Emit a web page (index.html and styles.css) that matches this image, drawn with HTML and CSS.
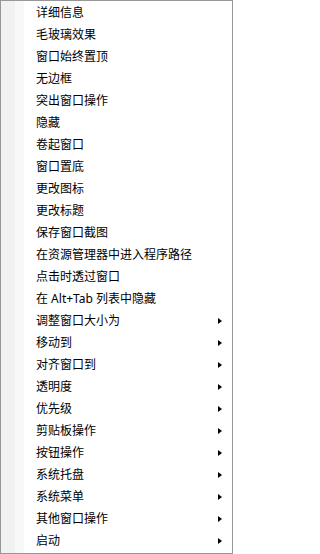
FILE: index.html
```html
<!DOCTYPE html>
<html lang="zh-CN">
<head>
<meta charset="utf-8">
<link rel="stylesheet" href="styles.css">
</head>
<body>
<div class="menu">
  <ul class="items">
    <li class="item"><span class="label">详细信息</span></li>
    <li class="item"><span class="label">毛玻璃效果</span></li>
    <li class="item"><span class="label">窗口始终置顶</span></li>
    <li class="item"><span class="label">无边框</span></li>
    <li class="item"><span class="label">突出窗口操作</span></li>
    <li class="item"><span class="label">隐藏</span></li>
    <li class="item"><span class="label">卷起窗口</span></li>
    <li class="item"><span class="label">窗口置底</span></li>
    <li class="item"><span class="label">更改图标</span></li>
    <li class="item"><span class="label">更改标题</span></li>
    <li class="item"><span class="label">保存窗口截图</span></li>
    <li class="item"><span class="label">在资源管理器中进入程序路径</span></li>
    <li class="item"><span class="label">点击时透过窗口</span></li>
    <li class="item"><span class="label">在 Alt+Tab 列表中隐藏</span></li>
    <li class="item sub"><span class="label">调整窗口大小为</span><span class="arrow"></span></li>
    <li class="item sub"><span class="label">移动到</span><span class="arrow"></span></li>
    <li class="item sub"><span class="label">对齐窗口到</span><span class="arrow"></span></li>
    <li class="item sub"><span class="label">透明度</span><span class="arrow"></span></li>
    <li class="item sub"><span class="label">优先级</span><span class="arrow"></span></li>
    <li class="item sub"><span class="label">剪贴板操作</span><span class="arrow"></span></li>
    <li class="item sub"><span class="label">按钮操作</span><span class="arrow"></span></li>
    <li class="item sub"><span class="label">系统托盘</span><span class="arrow"></span></li>
    <li class="item sub"><span class="label">系统菜单</span><span class="arrow"></span></li>
    <li class="item sub"><span class="label">其他窗口操作</span><span class="arrow"></span></li>
    <li class="item sub"><span class="label">启动</span><span class="arrow"></span></li>
  </ul>
</div>
</body>
</html>
```

FILE: styles.css
```css
html, body {
  margin: 0;
  padding: 0;
  background: #ffffff;
}

.menu {
  width: 233px;
  height: 554px;
  box-sizing: border-box;
  border: 1px solid #979797;
  background: linear-gradient(to right, #f1f1f1 0, #f1f1f1 14px, #f8f8f8 14px, #f8f8f8 23px, #ffffff 23px);
  font-family: "Noto Sans", "Noto Sans CJK SC", sans-serif;
  font-size: 12px;
  color: #000000;
}

.items {
  list-style: none;
  margin: 0;
  padding: 1px 0 0 0;
}

.item {
  height: 22px;
  display: flex;
  align-items: center;
  padding-left: 35px;
  padding-right: 10px;
}

.label {
  flex: 1;
  line-height: 22px;
  white-space: nowrap;
}

.arrow {
  width: 0;
  height: 0;
  border-top: 3.5px solid transparent;
  border-bottom: 3.5px solid transparent;
  border-left: 4px solid #000000;
}
```
